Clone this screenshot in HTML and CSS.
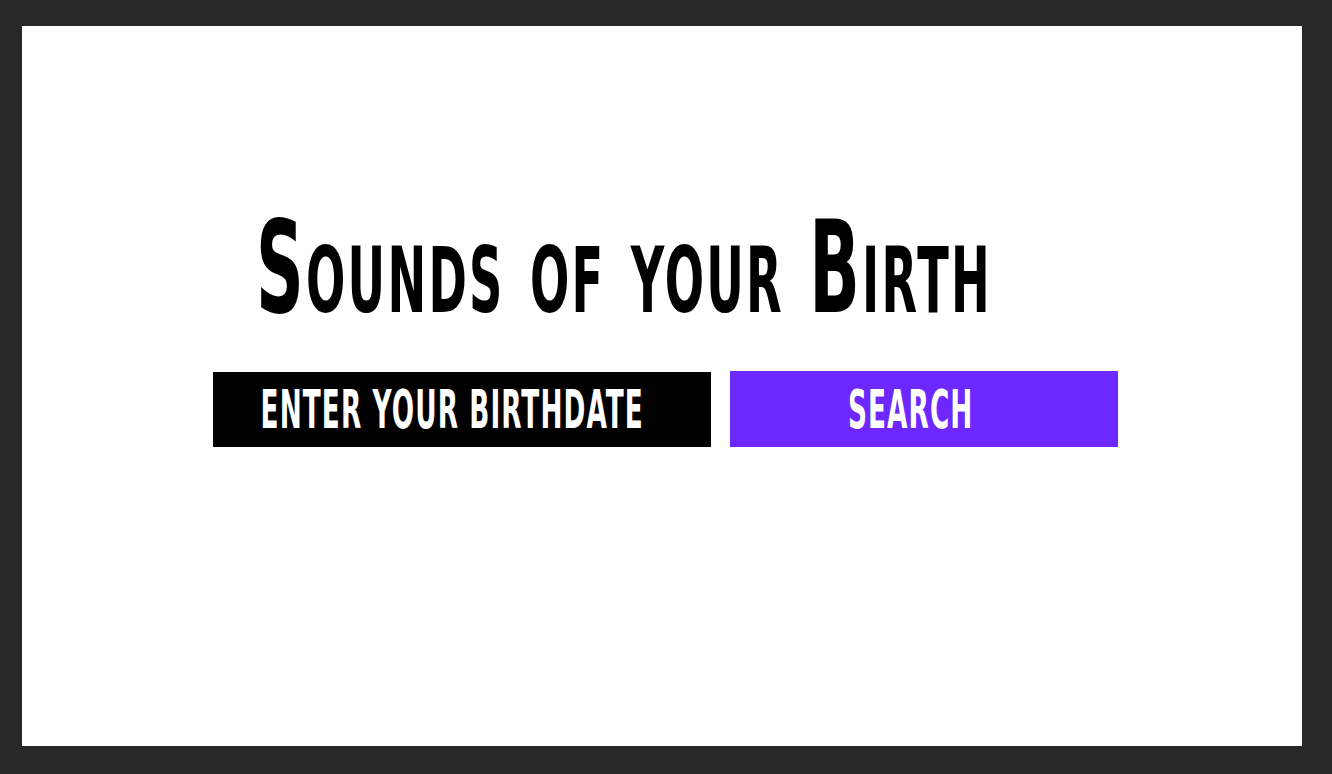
FILE: index.html
```html
<!DOCTYPE html>
<html>
<head>
<meta charset="utf-8">
<link rel="stylesheet" href="styles.css">
</head>
<body>
<main class="canvas">
  <h1 class="title"><span class="title-text">Sounds of your Birth</span></h1>
  <form class="search-row">
    <div class="date-field"><span class="label">ENTER YOUR BIRTHDATE</span></div>
    <button type="button" class="search-btn"><span class="label">SEARCH</span></button>
  </form>
</main>
</body>
</html>
```
FILE: styles.css
```css
html, body {
  margin: 0;
  padding: 0;
}
body {
  background: #282828;
  width: 1332px;
  height: 774px;
  padding: 26px 0 0 22px;
  box-sizing: border-box;
  overflow: hidden;
  font-family: "DejaVu Sans Condensed", "Liberation Sans", sans-serif;
}
.canvas {
  width: 1280px;
  height: 720px;
  background: #ffffff;
  display: flex;
  flex-direction: column;
  box-sizing: border-box;
  padding-top: 166px;
  overflow: hidden;
}
.title {
  margin: 0 0 0 234px;
  font-size: 129px;
  line-height: 150px;
  font-weight: 700;
  font-variant-caps: small-caps;
  color: #000;
  white-space: nowrap;
  letter-spacing: 4px;
}
.title-text {
  display: inline-block;
  transform: scaleX(0.571);
  transform-origin: left center;
}
.search-row {
  margin: 29px 0 0 191px;
  display: flex;
  gap: 19px;
  align-items: flex-start;
}
.date-field, .search-btn {
  display: flex;
  align-items: center;
  justify-content: center;
  color: #fff;
  font-family: inherit;
  font-weight: 700;
  font-size: 53px;
  overflow: hidden;
  white-space: nowrap;
  border: 0;
  padding: 0 20px 0 0;
  box-sizing: border-box;
}
.date-field {
  width: 498px;
  height: 75px;
  background: #000;
  margin-top: 1px;
}
.search-btn {
  width: 388px;
  height: 76px;
  background: #6c28fe;
  padding-right: 26px;
}
.label {
  display: inline-block;
  transform: scaleX(0.552);
  letter-spacing: 2px;
}
```
